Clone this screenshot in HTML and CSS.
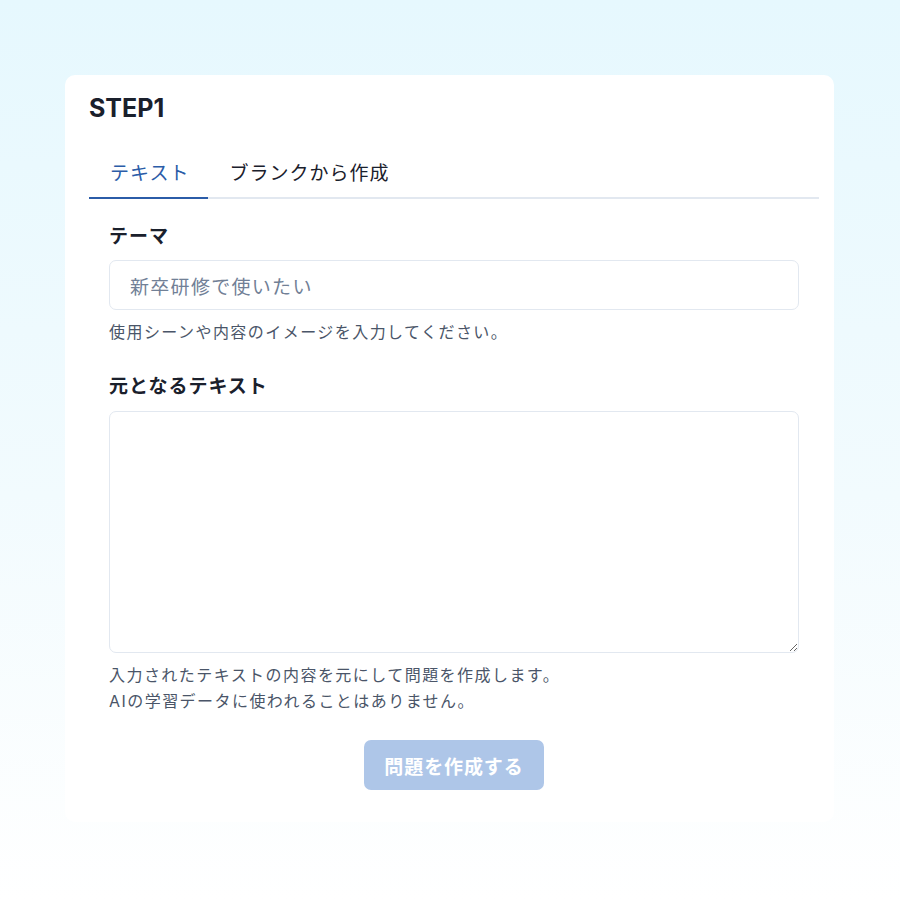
FILE: index.html
```html
<!DOCTYPE html>
<html lang="ja">
<head>
<meta charset="utf-8">
<link rel="stylesheet" href="styles.css">
</head>
<body>
<div class="page">
  <div class="card">
    <h1 class="title">STEP1</h1>
    <div class="tabs">
      <div class="tablist">
        <div class="tab active">テキスト</div>
        <div class="tab">ブランクから作成</div>
      </div>
      <div class="panel">
        <div class="field">
          <label class="label">テーマ</label>
          <input class="input" type="text" placeholder="新卒研修で使いたい">
          <p class="help">使用シーンや内容のイメージを入力してください。</p>
        </div>
        <div class="field second">
          <label class="label">元となるテキスト</label>
          <textarea class="textarea"></textarea>
          <p class="help">入力されたテキストの内容を元にして問題を作成します。<br>AIの学習データに使われることはありません。</p>
        </div>
        <div class="actions">
          <button class="btn" disabled>問題を作成する</button>
        </div>
      </div>
    </div>
  </div>
</div>
</body>
</html>
```

FILE: styles.css
```css
* { box-sizing: border-box; }
html, body { margin: 0; padding: 0; }
body {
  font-family: Inter, "Noto Sans CJK JP", sans-serif;
  color: #1a202c;
  background: linear-gradient(180deg, #e6f8fe 0%, #f2fbfe 55%, #ffffff 100%);
  min-height: 900px;
}
.page {
  padding: 75px 66px 0 65px;
}
.card {
  background: #ffffff;
  border-radius: 10px;
  height: 747px;
  padding: 16px 15px 0 24px;
}
.title {
  margin: 0;
  font-size: 25px;
  font-weight: 700;
  line-height: 34px;
  color: #1a202c;
}
.tablist {
  margin-top: 20px;
  display: flex;
  border-bottom: 2px solid #e2e8f0;
  height: 54px;
}
.tab {
  display: flex;
  align-items: center;
  padding: 0 21px;
  font-size: 19px;
  font-family: "Noto Sans CJK JP", sans-serif;
  color: #1a202c;
  margin-bottom: -2px;
  border-bottom: 2px solid transparent;
  letter-spacing: 1px;
}
.tab.active {
  color: #2b5ca8;
  border-bottom-color: #2b5ca8;
  padding: 0 19px 0 21px;
}
.panel {
  padding: 22px 20px 0 20px;
}
.field { display: flex; flex-direction: column; }
.field.second { margin-top: 26px; }
.label {
  font-family: "Noto Sans CJK JP", sans-serif;
  font-size: 19px;
  font-weight: 700;
  line-height: 28px;
  color: #1a202c;
  margin-bottom: 11px;
  letter-spacing: 1px;
}
.field.second .label { margin-bottom: 12px; }
.input {
  height: 50px;
  border: 1px solid #e2e8f0;
  border-radius: 7px;
  padding: 0 20px;
  font-family: "Noto Sans CJK JP", sans-serif;
  font-size: 19px;
  color: #1a202c;
  outline: none;
  letter-spacing: 1.3px;
}
.input::placeholder { color: #718096; }
.textarea {
  height: 242px;
  border: 1px solid #e2e8f0;
  border-radius: 7px;
  padding: 10px 20px;
  font-family: "Noto Sans CJK JP", sans-serif;
  font-size: 19px;
  resize: vertical;
  outline: none;
}
.help {
  margin: 9px 0 0 0;
  font-family: Inter, "Noto Sans CJK JP", sans-serif;
  font-size: 16px;
  line-height: 26px;
  color: #4a5568;
  letter-spacing: 1.45px;
}
.actions {
  display: flex;
  justify-content: center;
  margin-top: 26px;
}
.btn {
  width: 180px;
  height: 50px;
  border: none;
  border-radius: 7px;
  background: #aec6e8;
  color: #ffffff;
  font-family: "Noto Sans CJK JP", sans-serif;
  font-size: 19px;
  font-weight: 700;
  letter-spacing: 0.9px;
  cursor: not-allowed;
}
```
